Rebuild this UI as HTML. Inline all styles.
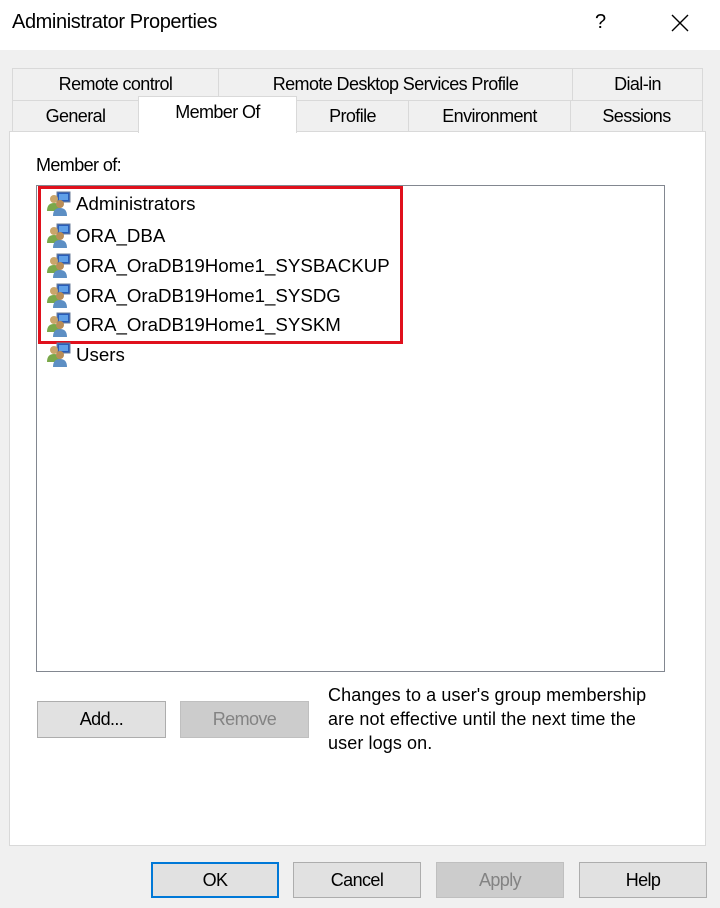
<!DOCTYPE html>
<html><head><meta charset="utf-8"><style>
*{margin:0;padding:0;box-sizing:border-box}
body{width:720px;height:908px;background:#f0f0f0;font-family:"Liberation Sans",sans-serif;color:#000;position:relative;overflow:hidden}
.a{position:absolute;white-space:nowrap}
.t{font-size:18px;letter-spacing:-0.6px}
.tab{position:absolute;background:#f0f0f0;border:1px solid #d9d9d9;display:flex;align-items:center;justify-content:center;font-size:18px;letter-spacing:-0.6px}
.btn{position:absolute;background:#e1e1e1;border:1px solid #adadad;display:flex;align-items:center;justify-content:center;font-size:18px;letter-spacing:-0.6px}
.dis{background:#cccccc;border-color:#bfbfbf;color:#838383}
.item{position:absolute;left:46px;display:flex;align-items:center;font-size:18.7px;letter-spacing:0px;height:28px}
.item svg{margin-right:4px}
</style></head><body>
<div class="a" style="left:0;top:0;width:720px;height:50px;background:#fff"></div>
<div class="a" style="left:12px;top:11px;font-size:20px;letter-spacing:-0.4px">Administrator Properties</div>
<div class="a" style="left:595px;top:11px;font-size:20px">?</div>
<svg class="a" style="left:670px;top:13px" width="20" height="20"><path d="M2 2L18 18M18 2L2 18" stroke="#000" stroke-width="1.4"/></svg>

<div class="tab" style="left:12px;top:68px;width:207px;height:33px">Remote control</div>
<div class="tab" style="left:218px;top:68px;width:355px;height:33px">Remote Desktop Services Profile</div>
<div class="tab" style="left:572px;top:68px;width:131px;height:33px">Dial-in</div>
<div class="a" style="left:9px;top:131px;width:697px;height:715px;background:#fff;border:1px solid #d9d9d9"></div>
<div class="tab" style="left:12px;top:100px;width:127px;height:32px">General</div>
<div class="tab" style="left:296px;top:100px;width:113px;height:32px">Profile</div>
<div class="tab" style="left:408px;top:100px;width:163px;height:32px">Environment</div>
<div class="tab" style="left:570px;top:100px;width:133px;height:32px">Sessions</div>
<div class="tab" style="left:138px;top:96px;width:159px;height:37px;background:#fff;border-bottom:none;align-items:flex-start;padding-top:5px">Member Of</div>

<div class="a t" style="left:36px;top:155px">Member of:</div>
<div class="a" style="left:36px;top:185px;width:629px;height:487px;border:1px solid #828790;background:#fff"></div>
<div class="a" style="left:38px;top:186px;width:365px;height:158px;border:3px solid #e0101c"></div>

<svg width="0" height="0" style="position:absolute"><defs><g id="ic">
<rect x="11" y="1" width="13" height="10" fill="#2a5db8" stroke="#6d7f9a"/>
<rect x="13" y="3" width="9" height="6" fill="#5fa0e8"/>
<circle cx="8" cy="8" r="4" fill="#c9a56a"/><path d="M1 20Q1 12 8 12Q15 12 15 20Z" fill="#7aa84a"/>
<circle cx="14" cy="13" r="4" fill="#b98d57"/><path d="M7 25Q7 17 14 17Q21 17 21 25Z" fill="#5d8fc4"/>
</g></defs></svg>

<div class="item" style="top:190px"><svg width="26" height="26"><use href="#ic"/></svg>Administrators</div>
<div class="item" style="top:222px"><svg width="26" height="26"><use href="#ic"/></svg>ORA_DBA</div>
<div class="item" style="top:252px"><svg width="26" height="26"><use href="#ic"/></svg>ORA_OraDB19Home1_SYSBACKUP</div>
<div class="item" style="top:282px"><svg width="26" height="26"><use href="#ic"/></svg>ORA_OraDB19Home1_SYSDG</div>
<div class="item" style="top:311px"><svg width="26" height="26"><use href="#ic"/></svg>ORA_OraDB19Home1_SYSKM</div>
<div class="item" style="top:341px"><svg width="26" height="26"><use href="#ic"/></svg>Users</div>

<div class="btn" style="left:37px;top:701px;width:129px;height:37px">Add...</div>
<div class="btn dis" style="left:180px;top:701px;width:129px;height:37px">Remove</div>
<div class="a" style="left:328px;top:683px;line-height:24px;font-size:18px;letter-spacing:0.1px">Changes to a user's group membership<br>are not effective until the next time the<br>user logs on.</div>

<div class="btn" style="left:151px;top:862px;width:128px;height:36px;border:2px solid #0078d7">OK</div>
<div class="btn" style="left:293px;top:862px;width:128px;height:36px">Cancel</div>
<div class="btn dis" style="left:436px;top:862px;width:128px;height:36px">Apply</div>
<div class="btn" style="left:579px;top:862px;width:128px;height:36px">Help</div>
</body></html>
